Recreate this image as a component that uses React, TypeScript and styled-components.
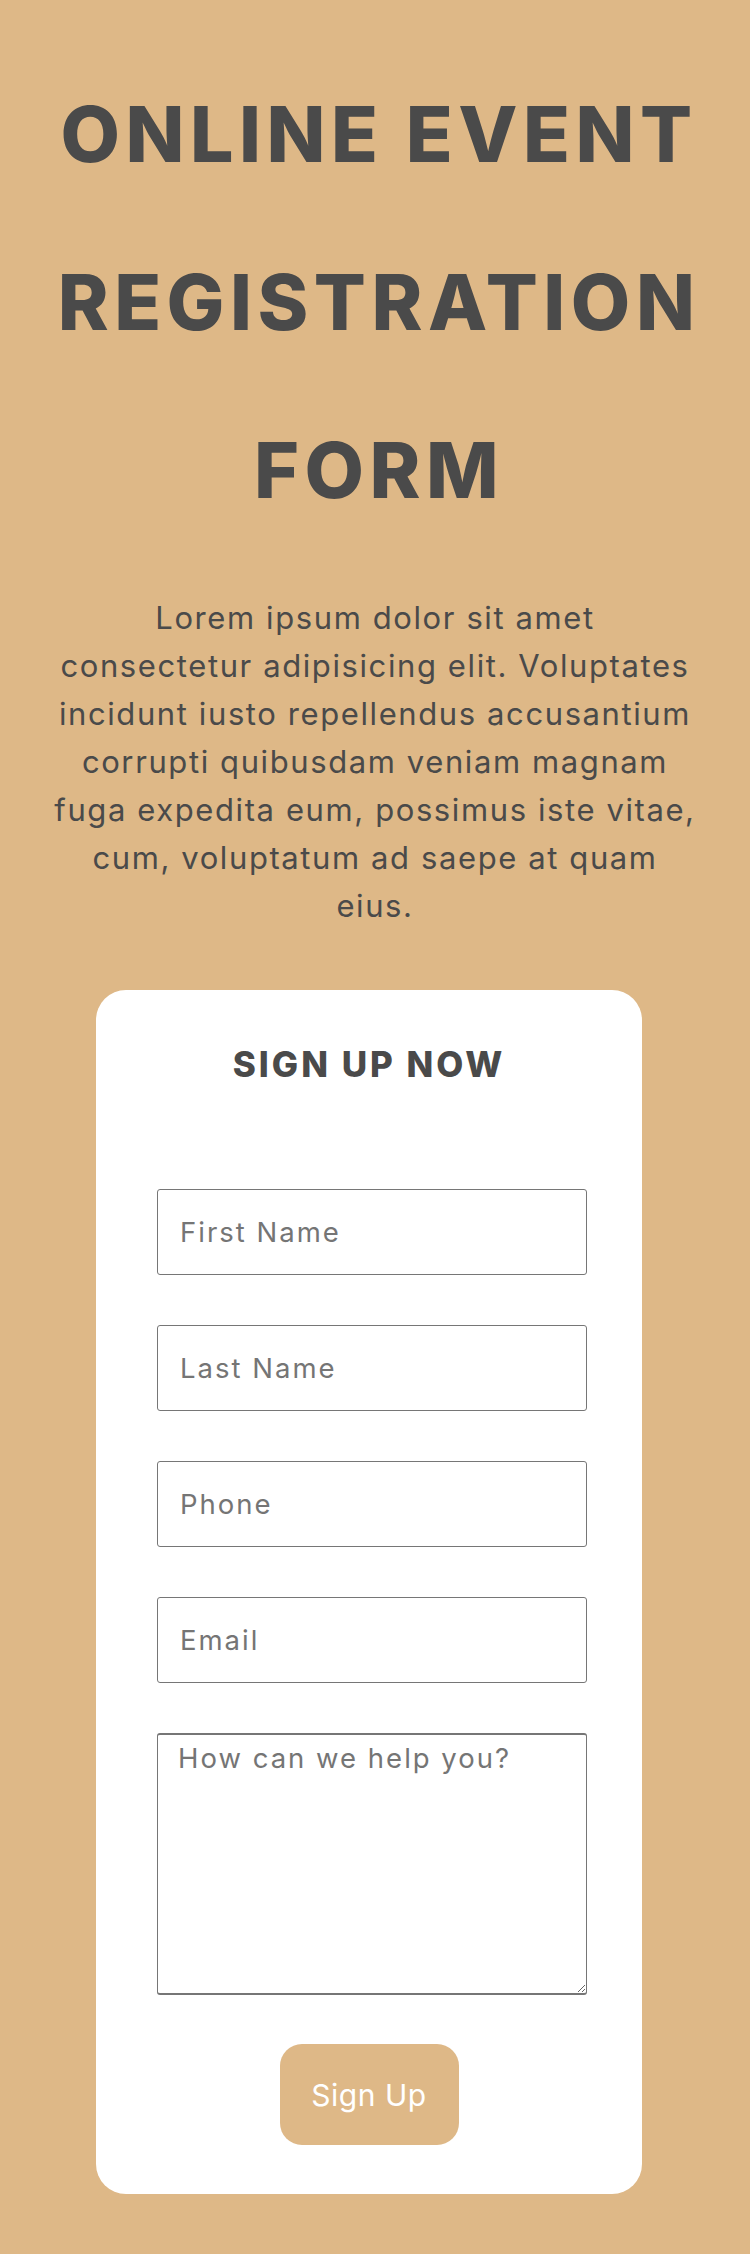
import React from "react";
import styled, { createGlobalStyle } from "styled-components";

const GlobalStyle = createGlobalStyle`
  html, body {
    margin: 0;
    padding: 0;
    background: #deb887;
  }
  * { box-sizing: border-box; }
`;

const Page = styled.main`
  display: flex;
  flex-direction: column;
  align-items: center;
  padding: 50px 0 59px;
  background: #deb887;
  color: #4a4a4a;
`;

const Title = styled.h1`
  margin: 0;
  padding-left: 8px;
  font-family: "Inter", "DejaVu Sans", sans-serif;
  font-weight: 800;
  font-size: 77px;
  line-height: 168px;
  letter-spacing: 5.5px;
  text-align: center;
  text-transform: uppercase;
`;

const Description = styled.p`
  margin: 40px 0 0;
  font-family: "Inter", "Noto Sans", sans-serif;
  font-weight: 400;
  font-size: 31px;
  line-height: 48px;
  letter-spacing: 1.6px;
  text-align: center;
  white-space: nowrap;
`;

const Card = styled.form`
  margin: 60px 12px 0 0;
  width: 546px;
  background: #ffffff;
  border-radius: 30px;
  padding: 52px 0 49px 61px;
  display: flex;
  flex-direction: column;
  align-items: flex-start;
`;

const CardTitle = styled.h2`
  align-self: stretch;
  margin: 0 0 103px -61px;
  font-family: "Inter", "DejaVu Sans", sans-serif;
  font-weight: 800;
  font-size: 35px;
  line-height: 44px;
  letter-spacing: 3px;
  text-align: center;
  text-transform: uppercase;
`;

const fieldStyles = `
  width: 430px;
  border: 1px solid #767676;
  border-radius: 3px;
  background: #ffffff;
  font-family: "Inter", "Noto Sans", sans-serif;
  font-size: 27.5px;
  letter-spacing: 2px;
  color: #333;
  outline: none;
  &::placeholder {
    color: #757575;
    opacity: 1;
  }
`;

const Field = styled.input`
  ${fieldStyles}
  height: 86px;
  padding: 0 22px;
  margin-bottom: 50px;
`;

const MessageField = styled.textarea`
  ${fieldStyles}
  height: 262px;
  padding: 6px 20px;
  line-height: normal;
  resize: vertical;
  border-top-width: 2px;
  border-bottom-width: 2px;
`;

const SubmitButton = styled.button`
  align-self: center;
  margin: 49px 0 0 -61px;
  width: 179px;
  height: 101px;
  border: none;
  border-radius: 22px;
  background: #deb887;
  color: #ffffff;
  font-family: "Inter", "Noto Sans", sans-serif;
  font-size: 30px;
  font-weight: 400;
  letter-spacing: 0.5px;
  cursor: pointer;
`;

const descriptionLines = [
  "Lorem ipsum dolor sit amet",
  "consectetur adipisicing elit. Voluptates",
  "incidunt iusto repellendus accusantium",
  "corrupti quibusdam veniam magnam",
  "fuga expedita eum, possimus iste vitae,",
  "cum, voluptatum ad saepe at quam",
  "eius.",
];

const fields = [
  { name: "firstName", placeholder: "First Name", type: "text" },
  { name: "lastName", placeholder: "Last Name", type: "text" },
  { name: "phone", placeholder: "Phone", type: "tel" },
  { name: "email", placeholder: "Email", type: "email" },
];

export default function App() {
  return (
    <>
      <GlobalStyle />
      <Page>
        <Title>
          Online Event
          <br />
          Registration
          <br />
          Form
        </Title>
        <Description>
          {descriptionLines.map((line, i) => (
            <React.Fragment key={i}>
              {line}
              {i < descriptionLines.length - 1 && <br />}
            </React.Fragment>
          ))}
        </Description>
        <Card onSubmit={(e) => e.preventDefault()}>
          <CardTitle>Sign up now</CardTitle>
          {fields.map((f) => (
            <Field key={f.name} name={f.name} type={f.type} placeholder={f.placeholder} />
          ))}
          <MessageField name="message" placeholder="How can we help you?" />
          <SubmitButton type="submit">Sign Up</SubmitButton>
        </Card>
      </Page>
    </>
  );
}
